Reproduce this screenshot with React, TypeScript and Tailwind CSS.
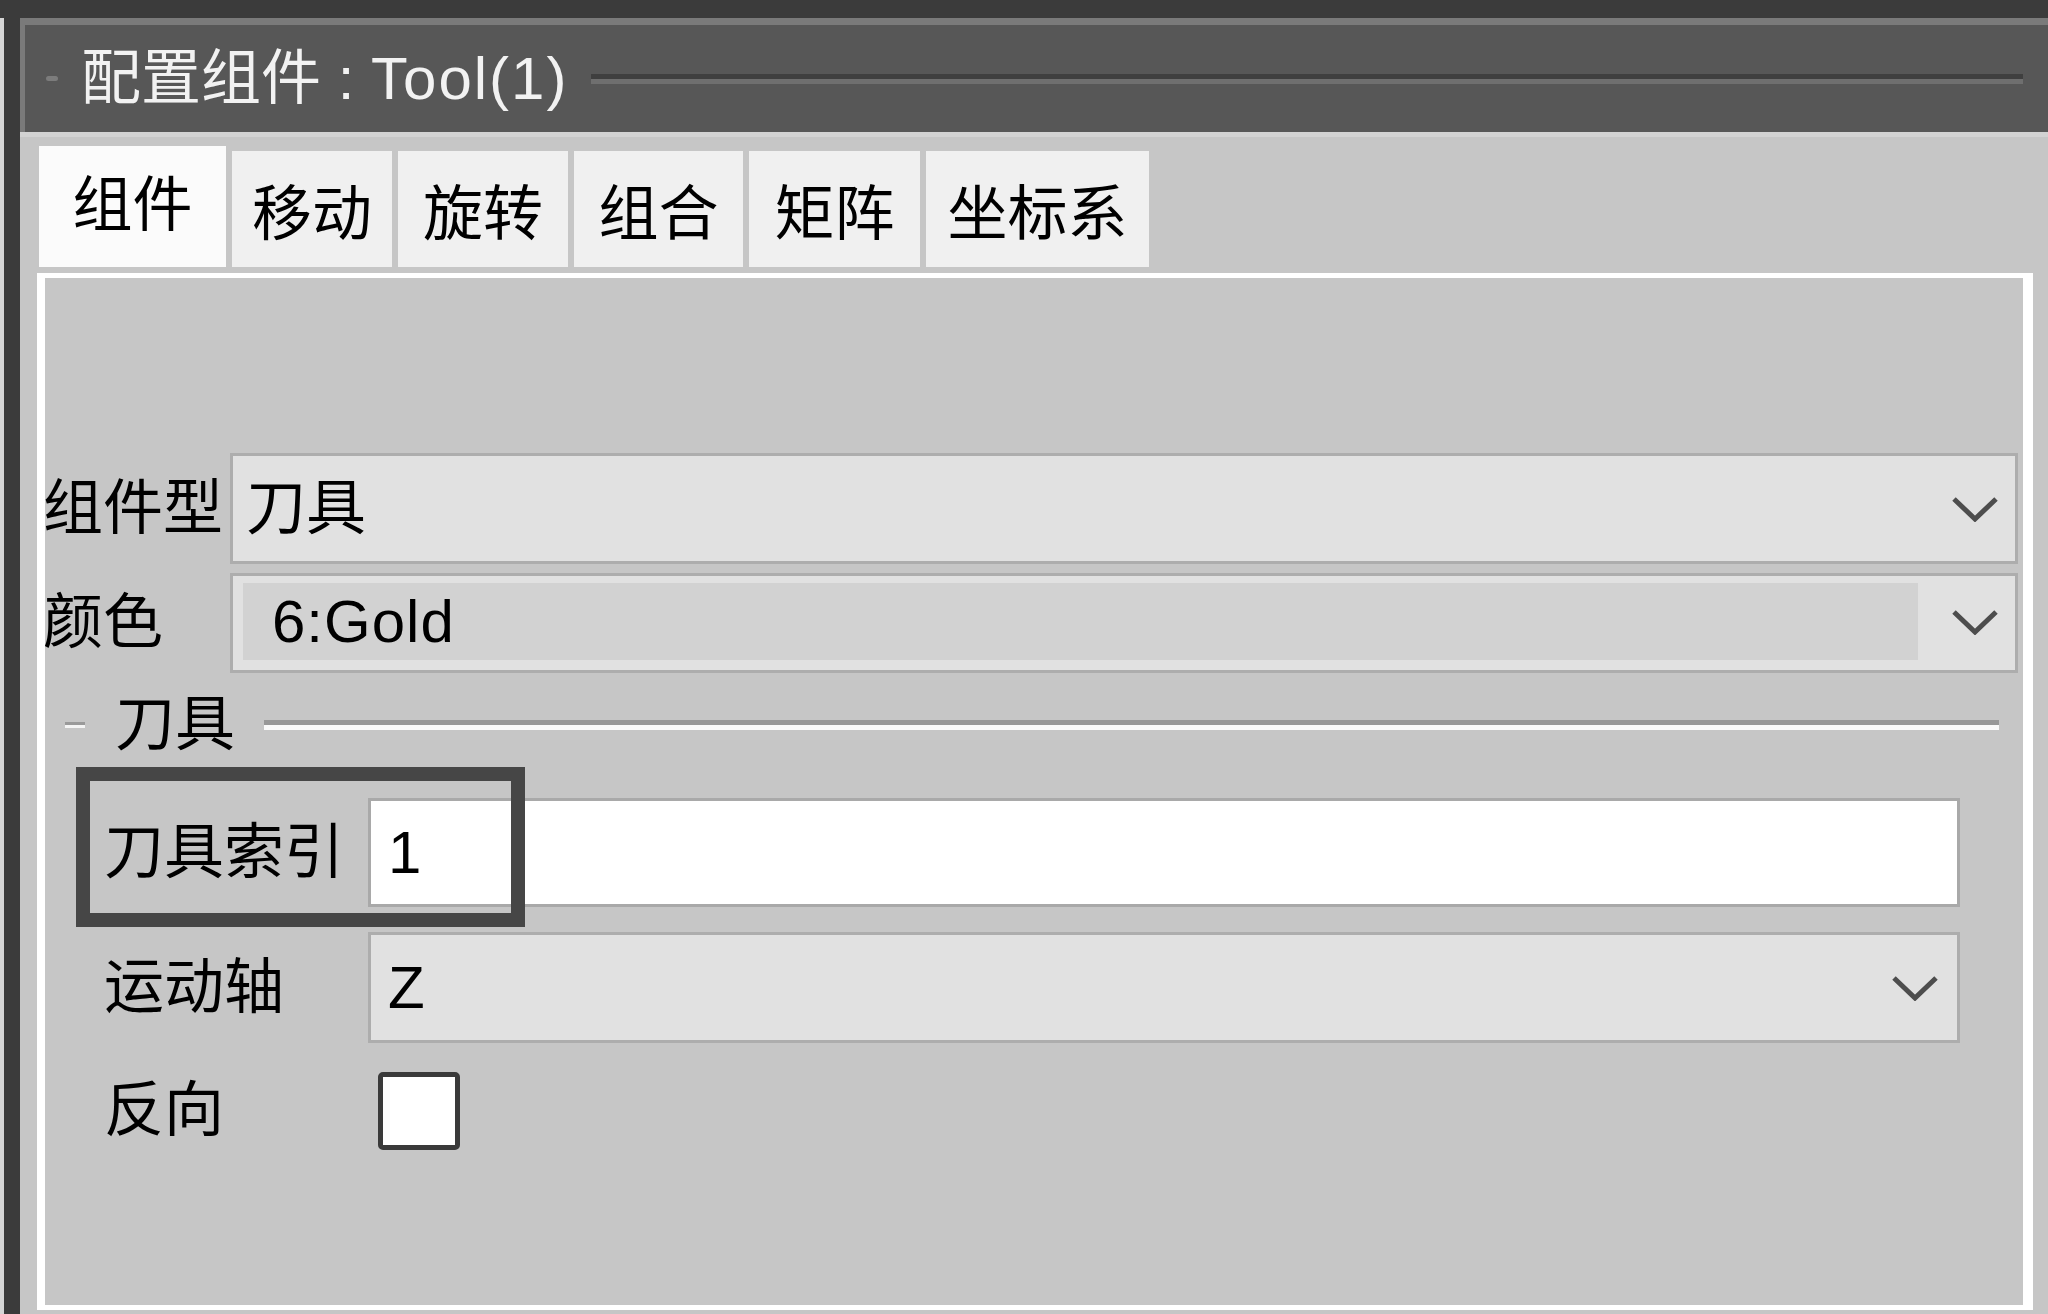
const font = "font-['Liberation_Sans','Noto_Sans_CJK_SC',sans-serif]";

const tabs = [
  { label: '组件', w: 'w-[160px]' },
  { label: '移动', w: 'w-[160px]' },
  { label: '旋转', w: 'w-[170px]' },
  { label: '组合', w: 'w-[169px]' },
  { label: '矩阵', w: 'w-[171px]' },
  { label: '坐标系', w: 'w-[223px]' },
];

function Chevron() {
  return (
    <svg width="48" height="26" viewBox="0 0 48 26" className="shrink-0">
      <polyline points="3,3 24,23 45,3" fill="none" stroke="#4d4d4d" strokeWidth="5" />
    </svg>
  );
}

function Groove({ className }: { className: string }) {
  return (
    <div className={className}>
      <div className="h-[5px] bg-[#3f3f3f]" />
      <div className="h-[5px] bg-[#6f6f6f]" />
    </div>
  );
}

export default function App() {
  return (
    <div className={`w-[2048px] h-[1314px] bg-[#3b3b3b] flex text-[60px] leading-none text-black ${font}`}>
      <div className="w-[4px] mt-[18px] bg-[#d6d6d6]" />
      <div className="w-[16px]" />

      <div className="flex-1 flex flex-col pt-[18px]">
        {/* header */}
        <div className="h-[114px] shrink-0 border-t-[7px] border-l-[5px] border-[#7a7a7a] bg-[#575757] flex items-center pl-[21px] pr-[25px]">
          <div className="w-[12px] h-[5px] rounded-full bg-[#7c7c7c]" />
          <span className="ml-[23px] text-[#f2f2f2] whitespace-pre">
            配置组件 : <span className="tracking-[2px]">Tool(1)</span>
          </span>
          <Groove className="flex-1 ml-[23px]" />
        </div>

        {/* content */}
        <div className="flex-1 flex flex-col bg-[#c6c6c6] border-t-[5px] border-[#d2d2d2] pl-[17px] pr-[15px] pb-[4px]">
          <div className="mt-[9px] h-[121px] flex items-end gap-[6px] pl-[2px] shrink-0">
            {tabs.map((t, i) =>
              i === 0 ? (
                <div key={t.label} className="w-[187px] h-[121px] bg-[#fbfbfb] flex items-center justify-center pb-[2px]">
                  {t.label}
                </div>
              ) : (
                <div key={t.label} className={`${t.w} h-[116px] bg-[#f0f0f0] flex items-center justify-center pt-[12px]`}>
                  {t.label}
                </div>
              )
            )}
          </div>

          {/* tab pane */}
          <div className="mt-[6px] flex-1 flex flex-col border-t-[5px] border-l-[8px] border-r-[10px] border-b-[5px] border-white bg-[#c6c6c6] pt-[175px]">
            <div className="h-[111px] flex items-center">
              <div className="w-[185px] -ml-[2px]">组件型</div>
              <div className="flex-1 mr-[5px] ml-[2px] h-full bg-[#e1e1e1] border-[3px] border-[#adadad] flex items-center pl-[13px] pr-[16px]">
                <span className="flex-1">刀具</span>
                <Chevron />
              </div>
            </div>

            <div className="mt-[9px] h-[100px] flex items-center">
              <div className="w-[185px] -ml-[2px]">颜色</div>
              <div className="flex-1 mr-[5px] ml-[2px] h-full bg-[#e1e1e1] border-[3px] border-[#adadad] flex items-center pl-[10px] pr-[16px] pt-[7px] pb-[10px]">
                <div className="flex-1 h-full bg-[#d2d2d2] flex items-center pl-[29px] mr-[33px] tracking-[1px]">6:Gold</div>
                <Chevron />
              </div>
            </div>

            {/* group box header */}
            <div className="mt-[27px] h-[50px] flex items-center pl-[20px] pr-[20px]">
              <div className="w-[20px]">
                <div className="h-[3px] bg-[#9a9a9a]" />
                <div className="h-[3px] bg-[#f4f4f4]" />
              </div>
              <span className="ml-[30px]">刀具</span>
              <div className="flex-1 ml-[29px] mr-[4px]">
                <div className="h-[5px] bg-[#989898]" />
                <div className="h-[5px] bg-[#fafafa]" />
              </div>
            </div>

            {/* tool index row */}
            <div className="relative mt-[48px] h-[109px] flex items-center pl-[59px] pr-[63px]">
              <div className="w-[264px]">刀具索引</div>
              <div className="flex-1 h-full bg-white border-[3px] border-[#a9a9a9] flex items-center pl-[17px]">1</div>
              <div className="absolute left-[31px] top-[-31px] w-[449px] h-[160px] border-[14px] border-[#464646]" />
            </div>

            <div className="mt-[25px] h-[111px] flex items-center pl-[59px] pr-[63px]">
              <div className="w-[264px]">运动轴</div>
              <div className="flex-1 h-full bg-[#e1e1e1] border-[3px] border-[#adadad] flex items-center pl-[17px] pr-[18px]">
                <span className="flex-1">Z</span>
                <Chevron />
              </div>
            </div>

            <div className="mt-[29px] h-[78px] flex items-center pl-[59px]">
              <div className="w-[274px]">反向</div>
              <div className="w-[82px] h-[78px] bg-white border-[5px] border-[#3a3a3a] rounded-[5px]" />
            </div>
          </div>
        </div>
      </div>
    </div>
  );
}
